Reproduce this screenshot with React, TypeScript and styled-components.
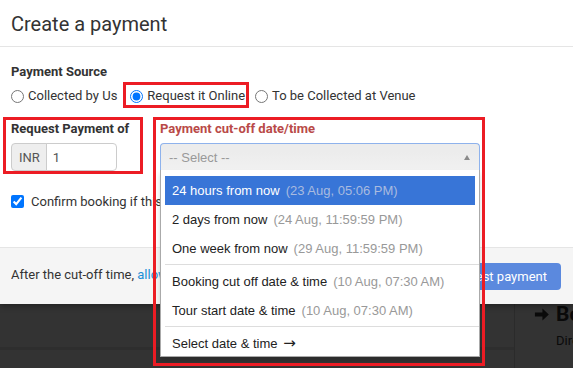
import React from 'react';
import styled, { createGlobalStyle, css } from 'styled-components';

const GlobalStyle = createGlobalStyle`
  html, body { margin: 0; padding: 0; background: #333; }
  body {
    font-family: Roboto, "Liberation Sans", Arial, sans-serif;
    font-size: 13px;
    color: #333;
    overflow: hidden;
  }
  * { box-sizing: border-box; }
`;

const Page = styled.div`
  width: 573px;
  height: 368px;
  overflow: hidden;
  display: flex;
  flex-direction: column;
  background: #333;
`;

const Modal = styled.div`
  position: relative;
  z-index: 1;
  flex-shrink: 0;
  background: #fff;
  box-shadow: 0 2px 6px rgba(0, 0, 0, 0.35);
`;

const Header = styled.div`
  padding: 13px 11px 10px;
  border-bottom: 1px solid #e5e5e5;
`;

const Title = styled.h4`
  margin: 0;
  font-size: 20px;
  line-height: 23px;
  font-weight: 400;
  color: #333;
`;

const Body = styled.div`
  padding: 17px 0 38px;
`;

const SectionLabel = styled.div<{ $error?: boolean }>`
  font-weight: 700;
  line-height: 15px;
  color: ${p => (p.$error ? '#b94a48' : '#333')};
`;

const SourceLabel = styled(SectionLabel)`
  padding-left: 11px;
  margin-bottom: 3px;
`;

const RadioRow = styled.div`
  display: flex;
  align-items: center;
  gap: 6px;
  height: 26px;
  padding-left: 11px;
`;

const RadioOption = styled.label<{ $marked?: boolean }>`
  display: inline-flex;
  align-items: center;
  gap: 4px;
  line-height: 15px;
  color: #333;
  white-space: nowrap;
  ${p =>
    p.$marked &&
    css`
      border: 3px solid #ec1c24;
      padding: 3px 1px 2px 4px;
    `}
`;

const Radio = styled.input`
  margin: 2px 0 0;
  width: 13px;
  height: 13px;
`;

const FieldsRow = styled.div`
  display: flex;
  gap: 10px;
  margin: 9px 0 0 3px;
`;

const AmountGroup = styled.div`
  width: 140px;
  flex-shrink: 0;
  border: 3px solid #ec1c24;
  padding: 1px 5px 0;
`;

const FieldLabel = styled(SectionLabel)`
  margin-bottom: 7px;
`;

const InputGroup = styled.div`
  display: flex;
  width: 106px;
  height: 28px;
`;

const Addon = styled.span`
  display: flex;
  align-items: center;
  padding: 0 6px 0 7px;
  background: #eee;
  border: 1px solid #ccc;
  border-radius: 4px 0 0 4px;
  color: #555;
`;

const AmountInput = styled.div`
  flex: 1;
  display: flex;
  align-items: center;
  padding-left: 6px;
  border: 1px solid #ccc;
  margin-left: -1px;
  border-radius: 0 4px 4px 0;
  color: #555;
`;

const CutoffGroup = styled.div`
  position: relative;
  width: 332px;
  flex-shrink: 0;
  padding: 4px 5px 0 7px;
`;

const Highlight = styled.div`
  position: absolute;
  top: 0;
  left: 0;
  width: 332px;
  height: 249px;
  border: 3px solid #ec1c24;
  pointer-events: none;
  z-index: 3;
`;

const SelectWrap = styled.div`
  position: relative;
  width: 320px;
`;

const SelectBox = styled.div`
  height: 27px;
  display: flex;
  align-items: center;
  justify-content: space-between;
  padding: 0 8px;
  border: 1px solid #8eb2ec;
  border-bottom: 0;
  border-radius: 4px 4px 0 0;
  background: linear-gradient(#ececec 30%, #f1f1f1 100%);
  font-family: "Liberation Sans", Arial, sans-serif;
  color: #999;
`;

const Caret = styled.span`
  width: 0;
  height: 0;
  border-left: 3px solid transparent;
  border-right: 3px solid transparent;
  border-bottom: 5px solid #8a8a8a;
  margin-right: 1px;
`;

const Dropdown = styled.div`
  position: absolute;
  top: 100%;
  left: 0;
  right: 0;
  height: 187px;
  overflow: hidden;
  background: #fff;
  border: 1px solid #aaa;
  border-top: 0;
  box-shadow: 0 4px 5px rgba(0, 0, 0, 0.15);
  padding: 6px 4px 0 4px;
  font-family: "Liberation Sans", Arial, sans-serif;
  font-size: 13px;
  z-index: 2;
`;

const Option = styled.div<{ $active?: boolean }>`
  height: 29px;
  line-height: 29px;
  padding: 0 7px;
  white-space: nowrap;
  color: ${p => (p.$active ? '#fff' : '#222')};
  background: ${p => (p.$active ? '#3875d7' : 'transparent')};
`;

const When = styled.span<{ $active?: boolean }>`
  margin-left: 6px;
  color: ${p => (p.$active ? '#a9bbdf' : '#999')};
`;

const Arrow = styled.span`
  font-family: "DejaVu Sans", sans-serif;
  font-size: 15px;
  margin-left: 1px;
`;

const Separator = styled.div`
  height: 1px;
  background: #ddd;
  margin: 1px -4px 2px 0;
`;

const CheckRow = styled.label`
  display: flex;
  align-items: center;
  gap: 7px;
  width: 149px;
  overflow: hidden;
  margin: 20px 0 0 11px;
  line-height: 15px;
  white-space: nowrap;
  color: #333;
`;

const Checkbox = styled.input`
  margin: 0;
  width: 13px;
  height: 13px;
  flex-shrink: 0;
`;

const Footer = styled.div`
  height: 57px;
  display: flex;
  align-items: center;
  justify-content: space-between;
  padding: 0 12px 0 11px;
  background: #f5f5f5;
  border-top: 1px solid #e5e5e5;
  color: #333;
`;

const FooterText = styled.span`
  width: 149px;
  overflow: hidden;
  white-space: nowrap;
  line-height: 15px;
  margin-bottom: 4px;
`;

const Link = styled.a`
  color: #1b8ed6;
  text-decoration: none;
`;

const PrimaryButton = styled.button`
  height: 27px;
  padding: 0 14px;
  border: 0;
  border-radius: 4px;
  background: #5b89de;
  color: #fff;
  font-family: Roboto, "Liberation Sans", Arial, sans-serif;
  font-size: 13px;
`;

const Backdrop = styled.div`
  flex: 1;
  display: flex;
  background: #333;
`;

const BackLeft = styled.div`
  width: 515px;
  flex-shrink: 0;
  border-right: 1px solid #2b2b2b;
  padding-top: 43px;
`;

const BackRule = styled.div`
  height: 3px;
  background: #2e2e2e;
`;

const BackRight = styled.div`
  flex: 1;
  min-width: 0;
  overflow: hidden;
  padding-left: 19px;
  white-space: nowrap;
`;

const BackHeading = styled.div`
  display: flex;
  align-items: center;
  gap: 7px;
  font-size: 21px;
  line-height: 21px;
  font-weight: 700;
  color: #0a0a0a;
`;

const BackText = styled.div`
  margin: 8px 0 0 22px;
  line-height: 15px;
  color: #0a0a0a;
`;

const ArrowIcon = () => (
  <svg width="15" height="15" viewBox="0 0 16 16" aria-hidden style={{ flexShrink: 0 }}>
    <path d="M1 5.8h8V1.5L15.8 8 9 14.5V10.2H1z" fill="#0a0a0a" />
  </svg>
);

const options = [
  { label: '24 hours from now', when: '(23 Aug, 05:06 PM)', active: true },
  { label: '2 days from now', when: '(24 Aug, 11:59:59 PM)' },
  { label: 'One week from now', when: '(29 Aug, 11:59:59 PM)', sep: true },
  { label: 'Booking cut off date & time', when: '(10 Aug, 07:30 AM)' },
  { label: 'Tour start date & time', when: '(10 Aug, 07:30 AM)', sep: true },
  { label: 'Select date & time', arrow: true },
];

export default function App() {
  return (
    <Page>
      <GlobalStyle />
      <Modal>
        <Header>
          <Title>Create a payment</Title>
        </Header>
        <Body>
          <SourceLabel>Payment Source</SourceLabel>
          <RadioRow>
            <RadioOption>
              <Radio type="radio" name="src" />
              Collected by Us
            </RadioOption>
            <RadioOption $marked>
              <Radio type="radio" name="src" defaultChecked />
              Request it Online
            </RadioOption>
            <RadioOption>
              <Radio type="radio" name="src" />
              To be Collected at Venue
            </RadioOption>
          </RadioRow>
          <FieldsRow>
            <AmountGroup>
              <FieldLabel>Request Payment of</FieldLabel>
              <InputGroup>
                <Addon>INR</Addon>
                <AmountInput>1</AmountInput>
              </InputGroup>
            </AmountGroup>
            <CutoffGroup>
              <Highlight />
              <FieldLabel $error>Payment cut-off date/time</FieldLabel>
              <SelectWrap>
                <SelectBox>
                  <span>-- Select --</span>
                  <Caret />
                </SelectBox>
                <Dropdown>
                  {options.map(o => (
                    <React.Fragment key={o.label}>
                      <Option $active={o.active}>
                        {o.label}
                        {o.when && <When $active={o.active}>{o.when}</When>}
                        {o.arrow && <Arrow> {'\u2192'}</Arrow>}
                      </Option>
                      {o.sep && <Separator />}
                    </React.Fragment>
                  ))}
                </Dropdown>
              </SelectWrap>
            </CutoffGroup>
          </FieldsRow>
          <CheckRow>
            <Checkbox type="checkbox" defaultChecked />
            Confirm booking if this payment is received
          </CheckRow>
        </Body>
        <Footer>
          <FooterText>
            After the cut-off time, <Link href="#">allow late payment</Link>
          </FooterText>
          <PrimaryButton>Request payment</PrimaryButton>
        </Footer>
      </Modal>
      <Backdrop>
        <BackLeft>
          <BackRule />
        </BackLeft>
        <BackRight>
          <BackHeading>
            <ArrowIcon />
            Booking Details
          </BackHeading>
          <BackText>Directions</BackText>
        </BackRight>
      </Backdrop>
    </Page>
  );
}
